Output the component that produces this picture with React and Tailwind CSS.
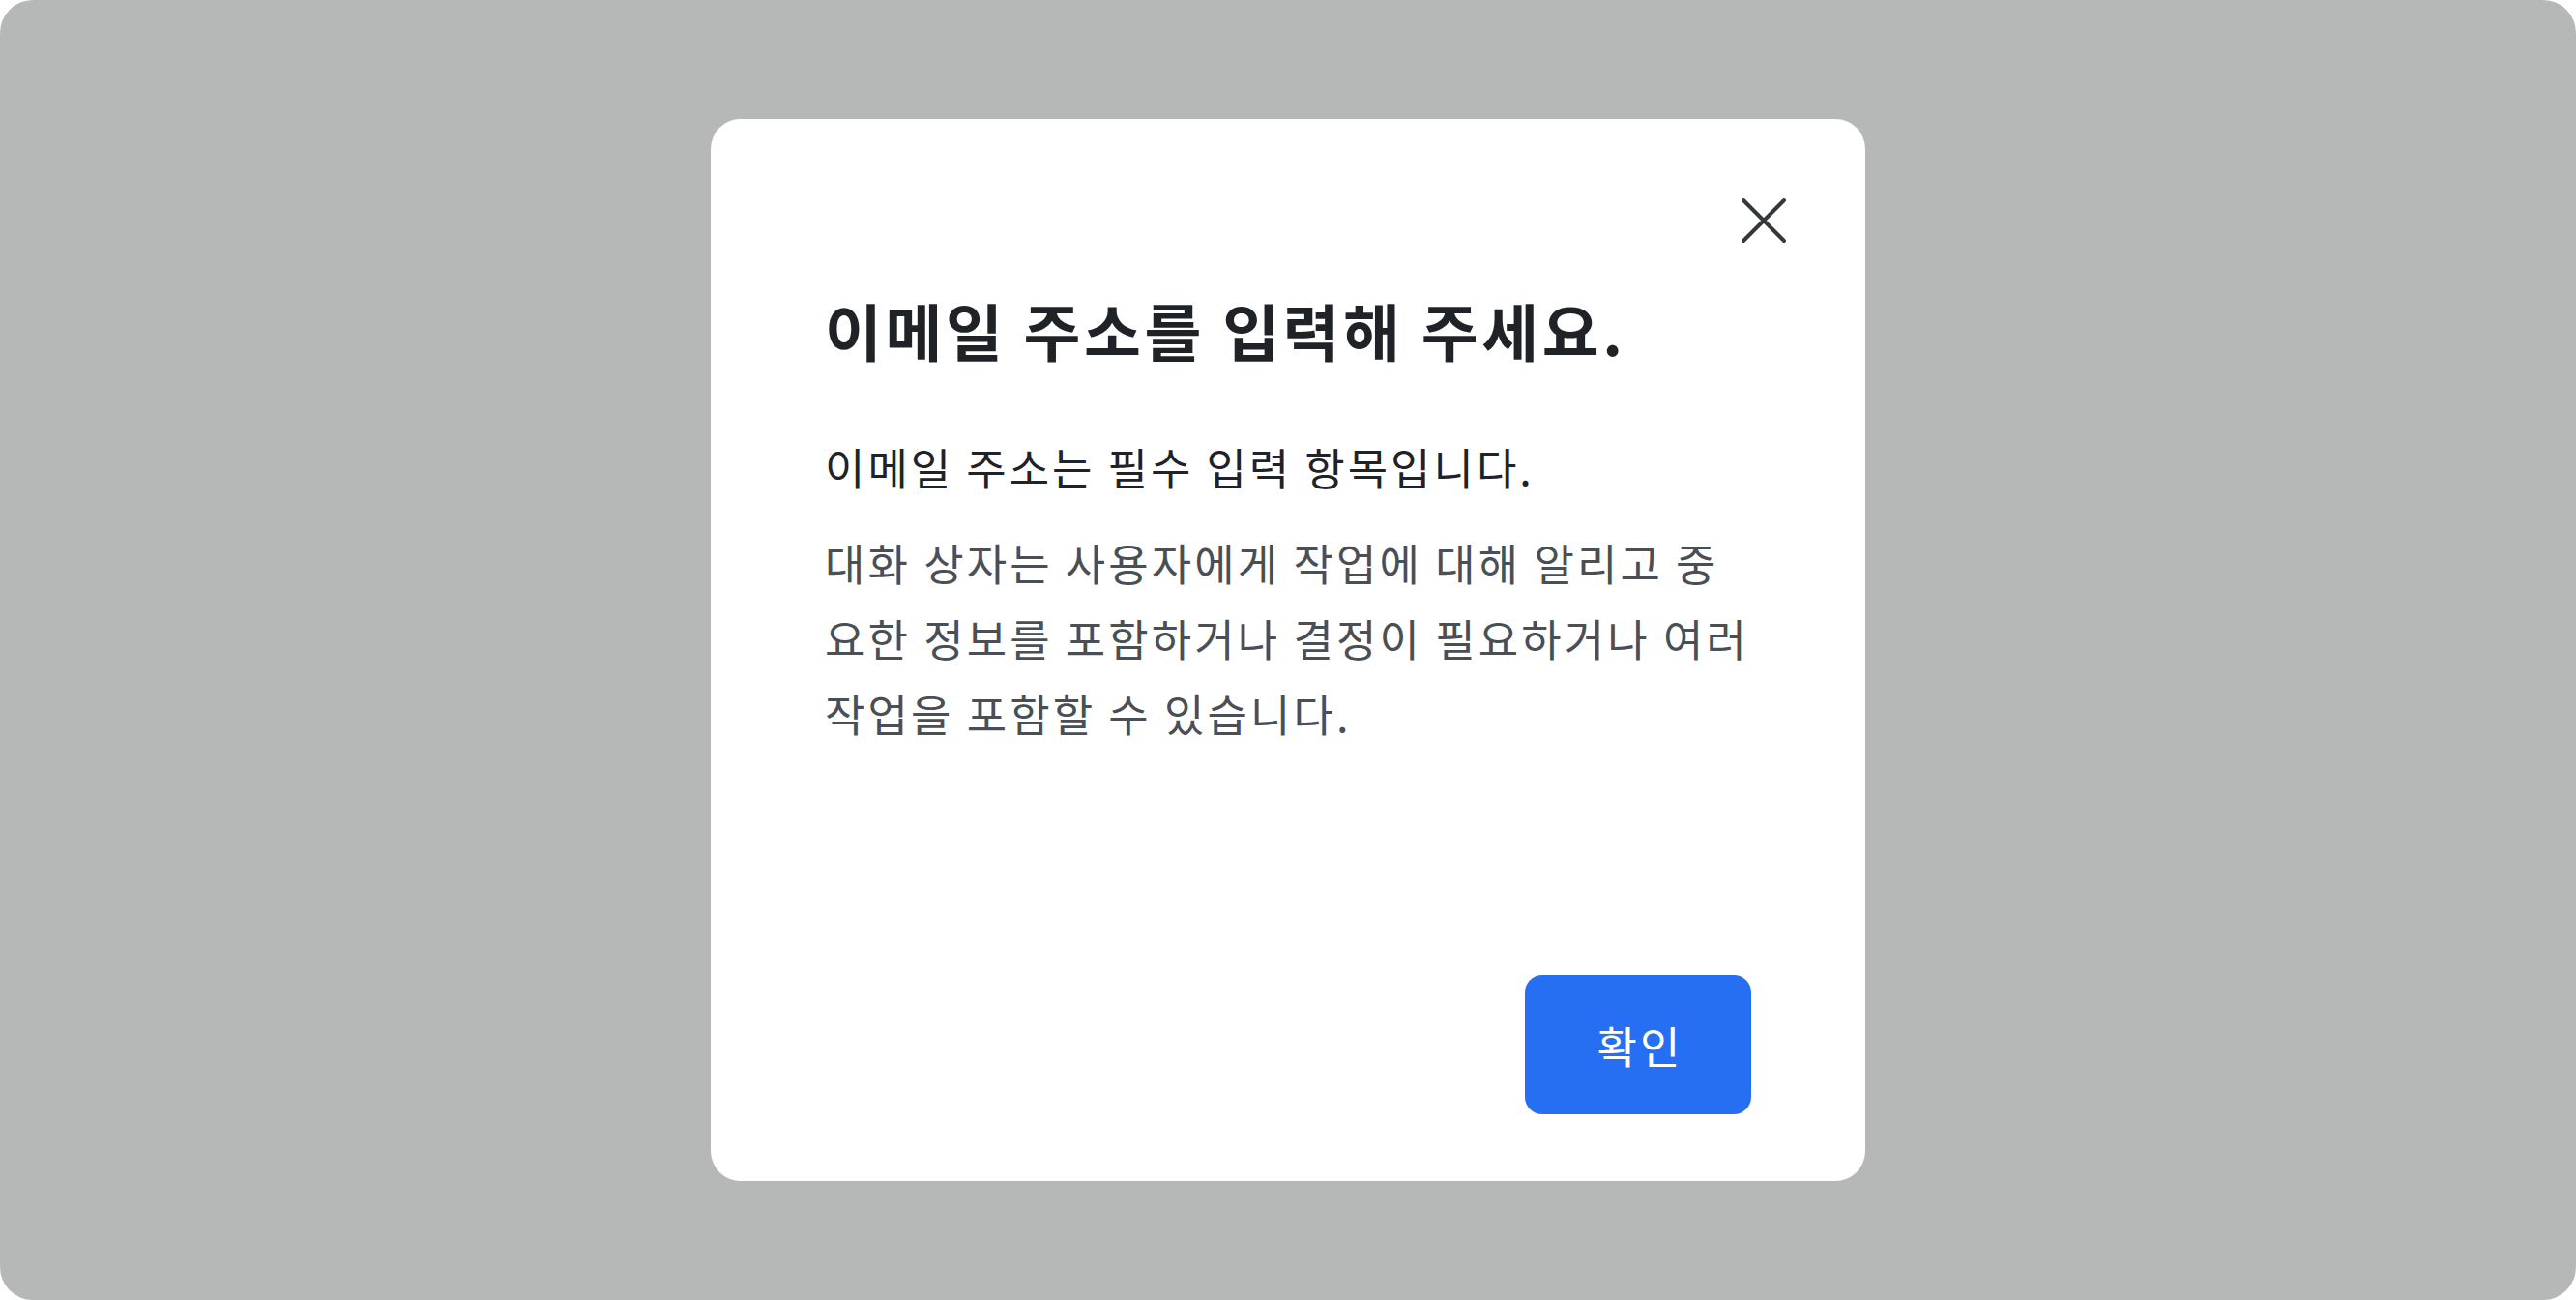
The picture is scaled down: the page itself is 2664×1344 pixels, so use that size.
export default function App() {
  return (
    <div className="w-full h-[1344px] bg-white">
      {/* Backdrop */}
      <div
        className="w-full h-full rounded-[34px] bg-[#b6b8b7] flex items-center justify-center"
        style={{ fontFamily: '"Noto Sans CJK KR", "Noto Sans", sans-serif' }}
      >
        {/* Dialog */}
        <div className="relative w-[1194px] h-[1098px] bg-white rounded-[31px] flex flex-col pt-[173px] pb-[69px] pl-[118px] pr-[116px]">
          <button className="absolute top-[80px] right-[80px] w-[50px] h-[50px] flex items-center justify-center">
            <svg width="50" height="50" viewBox="0 0 50 50" fill="none">
              <path d="M4 4L46 46M46 4L4 46" stroke="#35383d" strokeWidth="4" strokeLinecap="round" />
            </svg>
          </button>

          <h2 className="text-[64px] leading-[1.4] font-bold tracking-[3.6px] text-[#1f2226]">
            이메일 주소를 입력해 주세요.
          </h2>
          <p className="mt-[56px] text-[45px] leading-[81px] tracking-[3px] text-[#1f2226]">
            이메일 주소는 필수 입력 항목입니다.
          </p>
          <p className="mt-[20px] text-[45px] leading-[78px] tracking-[3.1px] break-all text-[#4a4f56]">
            대화 상자는 사용자에게 작업에 대해 알리고 중요한 정보를 포함하거나 결정이 필요하거나 여러 작업을 포함할 수 있습니다.
          </p>

          <div className="flex-1" />

          <div className="flex justify-end pr-[2px]">
            <button className="w-[234px] h-[144px] pl-[4px] rounded-[18px] bg-[#276ff2] text-white text-[45px] leading-none tracking-[3px]">
              확인
            </button>
          </div>
        </div>
      </div>
    </div>
  );
}
